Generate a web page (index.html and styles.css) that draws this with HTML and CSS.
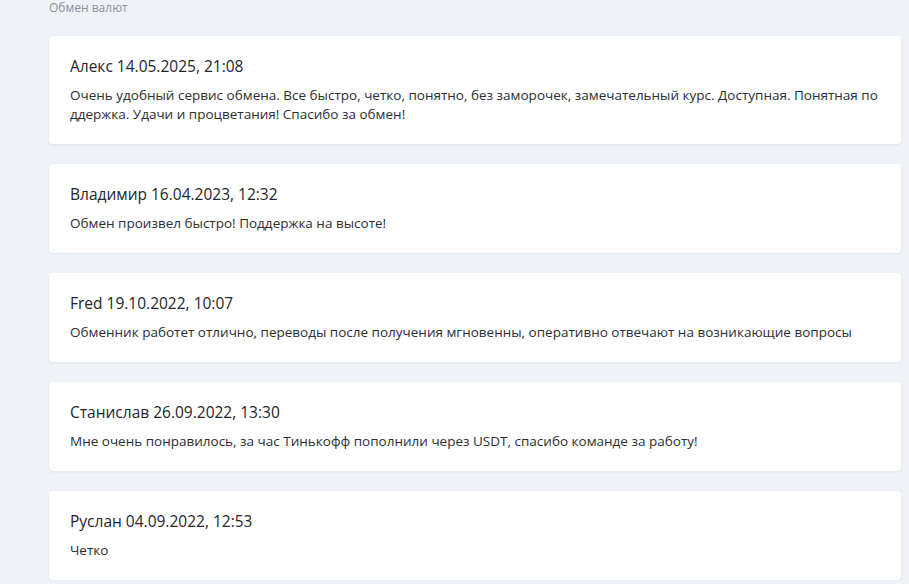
FILE: index.html
```html
<!DOCTYPE html>
<html lang="ru">
<head>
    <meta charset="utf-8">
    <title>Отзывы — Обмен валют</title>
    <link rel="stylesheet" href="styles.css">
</head>
<body>
    <div class="page">
        <div class="breadcrumb">Обмен валют</div>

        <div class="reviews">
            <div class="review">
                <div class="review-head">Алекс 14.05.2025, 21:08</div>
                <div class="review-text">Очень удобный сервис обмена. Все быстро, четко, понятно, без заморочек, замечательный курс. Доступная. Понятная по ддержка. Удачи и процветания! Спасибо за обмен!</div>
            </div>
            <div class="review">
                <div class="review-head">Владимир 16.04.2023, 12:32</div>
                <div class="review-text">Обмен произвел быстро! Поддержка на высоте!</div>
            </div>
            <div class="review">
                <div class="review-head">Fred 19.10.2022, 10:07</div>
                <div class="review-text">Обменник работет отлично, переводы после получения мгновенны, оперативно отвечают на возникающие вопросы</div>
            </div>
            <div class="review">
                <div class="review-head">Станислав 26.09.2022, 13:30</div>
                <div class="review-text">Мне очень понравилось, за час Тинькофф пополнили через USDT, спасибо команде за работу!</div>
            </div>
            <div class="review">
                <div class="review-head">Руслан 04.09.2022, 12:53</div>
                <div class="review-text">Четко</div>
            </div>
        </div>
    </div>
</body>
</html>
```

FILE: styles.css
```css
body {
    margin: 0;
    background: #eff2f7;
    font-family: 'Open Sans', 'Noto Sans', sans-serif;
    color: #2a2d33;
}

.page {
    padding: 0 8px 0 49px;
}

.breadcrumb {
    font-size: 12px;
    line-height: 16px;
    color: #8b9099;
    margin-bottom: 20px;
}

.reviews {
    display: flex;
    flex-direction: column;
    gap: 20px;
}

.review {
    background: #ffffff;
    border-radius: 4px;
    padding: 20px 21px;
    box-shadow: 0 1px 3px rgba(40, 55, 90, 0.08);
}

.review-head {
    font-size: 15.5px;
    line-height: 20px;
    font-weight: 500;
    color: #23262b;
    margin-bottom: 10px;
}

.review-text {
    font-size: 13.5px;
    line-height: 19px;
    color: #2b2e33;
}
```
